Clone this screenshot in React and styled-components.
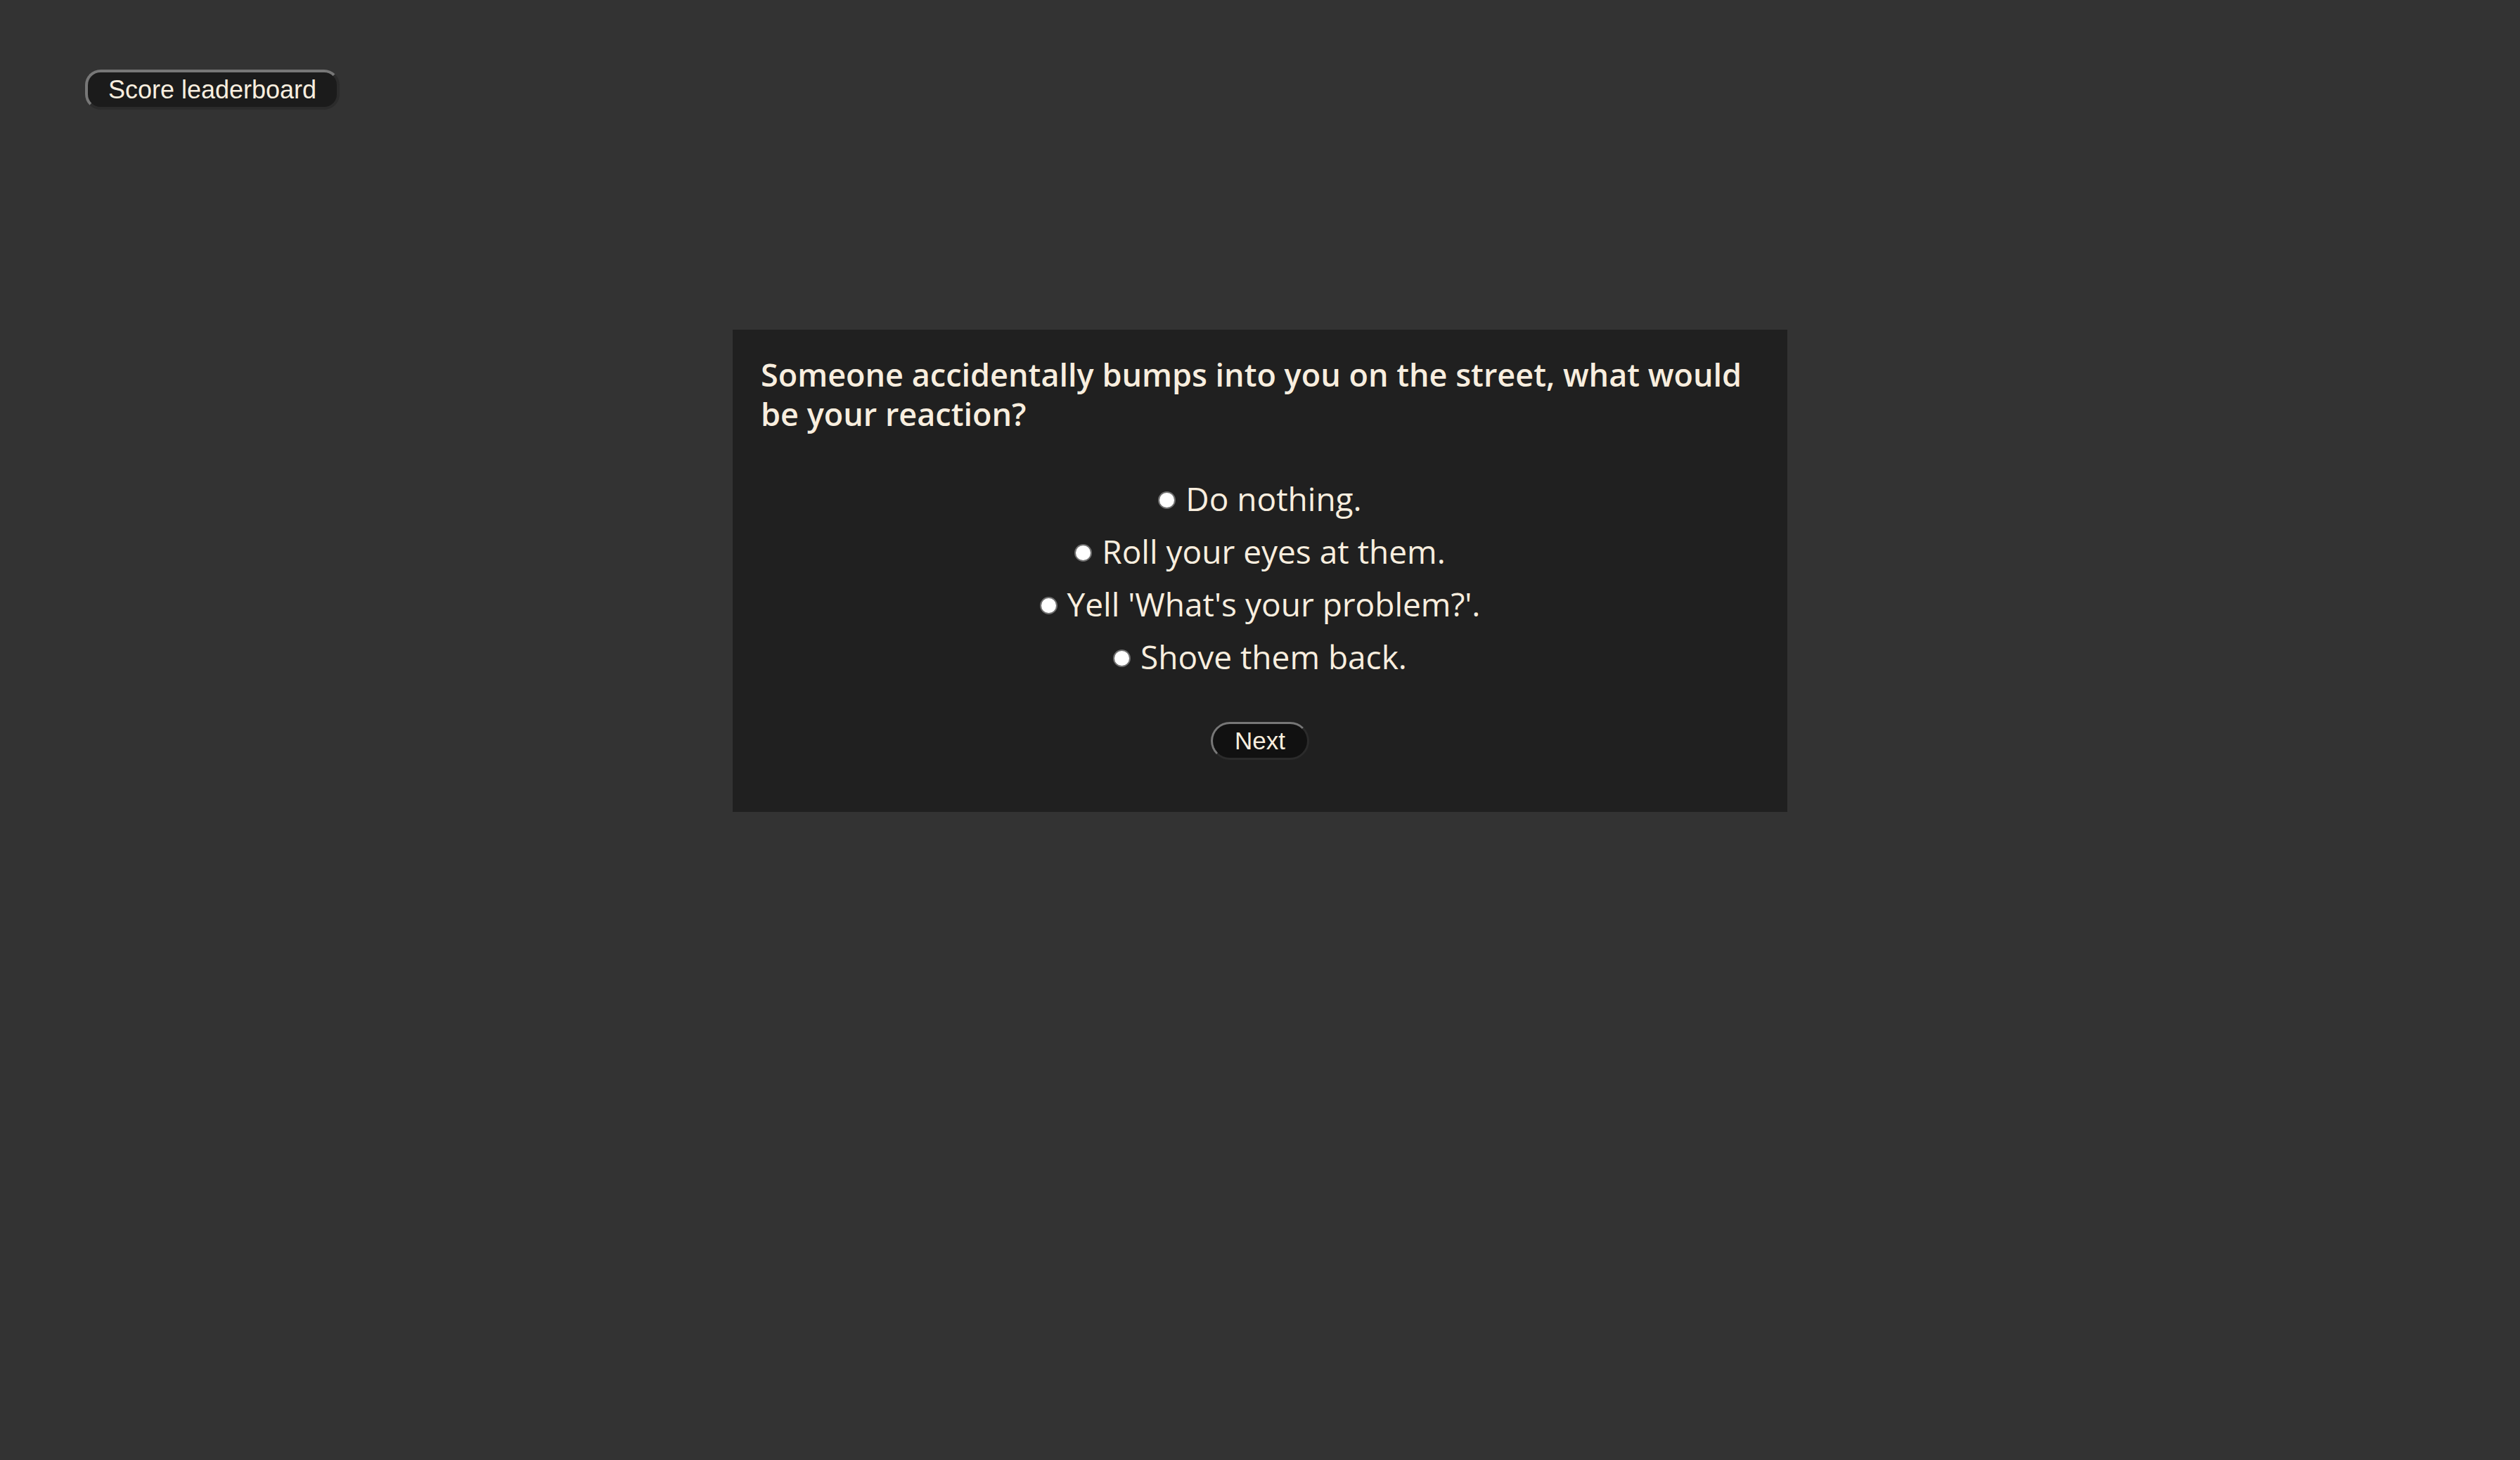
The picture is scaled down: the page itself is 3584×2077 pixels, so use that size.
import React from "react";
import styled, { createGlobalStyle } from "styled-components";

const Global = createGlobalStyle`
  html, body { margin: 0; padding: 0; background: #333333; }
  body { font-family: "Open Sans", "Liberation Sans", sans-serif; }
`;

const Page = styled.div`
  min-height: 2077px;
  padding: 99px 0 0 121px;
  box-sizing: border-box;
  display: flex;
  flex-direction: column;
  align-items: flex-start;
`;

const PillButton = styled.button`
  font-family: "Liberation Sans", Arial, sans-serif;
  color: #f8eedf;
  background: ${(p) => (p.$dark ? "#111111" : "#1b1b1b")};
  border-style: solid;
  border-width: ${(p) => p.$bw}px;
  border-color: #777777 #2b2b2b #2b2b2b #777777;
  border-radius: 999px;
  padding: 0;
  box-sizing: border-box;
  cursor: pointer;
  display: flex;
  align-items: center;
  justify-content: center;
`;

const LeaderButton = styled(PillButton)`
  width: 362px;
  height: 57px;
  font-size: 36px;
  border-radius: 22px;
`;

const NextButton = styled(PillButton)`
  width: 140px;
  height: 54px;
  font-size: 35px;
`;

const Card = styled.section`
  align-self: center;
  margin-left: -121px;
  margin-top: 313px;
  width: 1500px;
  box-sizing: border-box;
  background: #202020;
  padding: 36px 40px 74px 40px;
  display: flex;
  flex-direction: column;
  align-items: center;
`;

const Question = styled.h2`
  align-self: stretch;
  margin: 0;
  font-family: "Open Sans", sans-serif;
  font-weight: 600;
  font-size: 45px;
  line-height: 56px;
  color: #f8eedf;
`;

const Options = styled.ul`
  list-style: none;
  margin: 54px 0 0 0;
  padding: 0;
  display: flex;
  flex-direction: column;
  align-items: center;
`;

const Option = styled.li`
  display: flex;
  align-items: center;
  gap: 14px;
  height: 75px;
  font-size: 46px;
  color: #f8eedf;
  font-family: "Open Sans", sans-serif;
`;

const Radio = styled.span`
  width: 25px;
  height: 25px;
  border-radius: 50%;
  box-sizing: border-box;
  background: #ffffff;
  border: 2px solid #6f6f6f;
  margin-top: 6px;
  flex: none;
`;

const Footer = styled.div`
  margin-top: 56px;
  display: flex;
  justify-content: center;
`;

const options = [
  "Do nothing.",
  "Roll your eyes at them.",
  "Yell 'What's your problem?'.",
  "Shove them back.",
];

export default function App() {
  return (
    <>
      <Global />
      <Page>
        <LeaderButton $bw={4}>Score leaderboard</LeaderButton>
        <Card>
          <Question>
            Someone accidentally bumps into you on the street, what would be
            your reaction?
          </Question>
          <Options>
            {options.map((o) => (
              <Option key={o}>
                <Radio />
                {o}
              </Option>
            ))}
          </Options>
          <Footer>
            <NextButton $bw={3} $dark>
              Next
            </NextButton>
          </Footer>
        </Card>
      </Page>
    </>
  );
}
